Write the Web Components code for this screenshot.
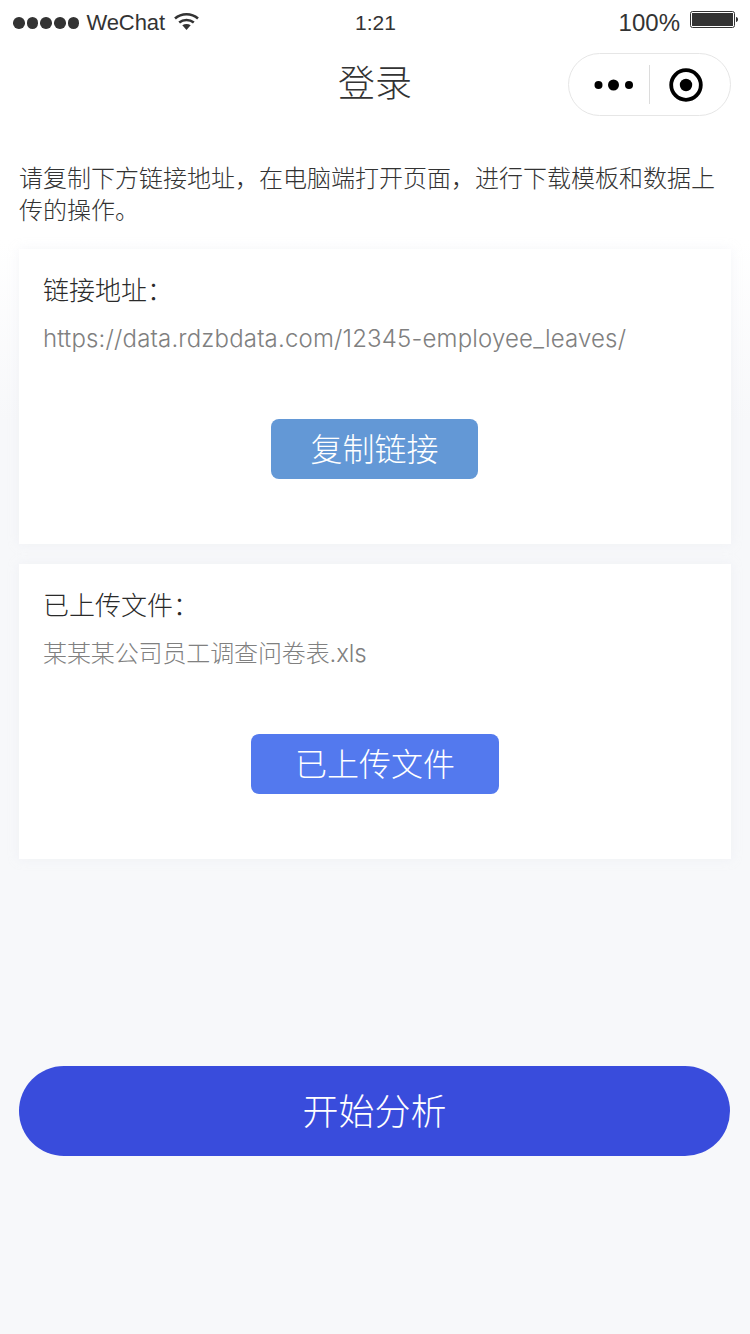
<!DOCTYPE html>
<html lang="zh">
<head>
<meta charset="utf-8">
<title>登录</title>
<style>
  html, body { margin: 0; padding: 0; }
  body {
    width: 750px;
    height: 1334px;
    overflow: hidden;
    background: linear-gradient(#fff 0, #fff 240px, #f7f8fa 420px);
    font-family: "Liberation Sans", "Noto Sans CJK SC", sans-serif;
  }
</style>
</head>
<body>
<login-page></login-page>

<script>
const CJK = '"Noto Sans CJK SC", sans-serif'

class StatusBar extends HTMLElement {
  constructor () {
    super()
    this.attachShadow({ mode: 'open' }).innerHTML = /*html*/`
    <style>
      :host {
        display: grid;
        grid-template-columns: 1fr auto 1fr;
        align-items: center;
        height: 40px;
        padding: 6px 12px 0 13px;
        box-sizing: border-box;
        font: 24px "Liberation Sans", sans-serif;
        color: #333;
      }
      .left, .right { display: flex; align-items: center; }
      .right { justify-content: flex-end; }
      .dots { display: flex; gap: 2px; margin-right: 7px; }
      .dots i { width: 11.700px; height: 11.700px; border-radius: 50%; background: #333; }
      .name { font-size: 22px; letter-spacing: -.1px; }
      .wifi { margin-left: 9px; margin-top: -5px; }
      .time { font-size: 21px; }
      .pct { margin-right: 10px; }
      .battery { margin-top: -6px; }
    </style>
    <div class="left">
      <span class="dots"><i></i><i></i><i></i><i></i><i></i></span>
      <span class="name">WeChat</span>
      <svg class="wifi" width="25" height="18" viewBox="0 0 25 18">
        <path d="M1 6.500C7.500.8 17.500.8 24 6.500" fill="none" stroke="#333" stroke-width="2.600"/>
        <path d="M5.200 10.500c4.200-3.400 10.400-3.400 14.600 0" fill="none" stroke="#333" stroke-width="2.600"/>
        <path d="M8.300 13.300c2.500-1.600 5.900-1.600 8.400 0L12.500 18z" fill="#333"/>
      </svg>
    </div>
    <div class="time">1:21</div>
    <div class="right">
      <span class="pct">100%</span>
      <svg class="battery" width="48" height="20" viewBox="0 0 48 20">
        <rect x="0.500" y="1.500" width="44" height="16" rx="2" fill="#fff" stroke="#333"/>
        <rect x="2" y="3" width="41" height="13" fill="#333"/>
        <path d="M46 7c1.300.3 2 1.200 2 2.500s-.7 2.200-2 2.500z" fill="#333"/>
      </svg>
    </div>
    `
  }
}

class NavBar extends HTMLElement {
  constructor () {
    super()
    this.attachShadow({ mode: 'open' }).innerHTML = /*html*/`
    <style>
      :host {
        display: flex;
        align-items: center;
        justify-content: center;
        position: relative;
        height: 88px;
      }
      .title {
        font: 300 37px ${CJK};
        color: #333;
        padding-bottom: 6px;
      }
      .capsule {
        position: absolute;
        right: 19px;
        top: 13px;
        width: 163px;
        height: 63px;
        box-sizing: border-box;
        border: 1px solid #e6e6e6;
        border-radius: 32px;
        background: #fff;
        display: flex;
        align-items: center;
      }
      .half { display: flex; align-items: center; justify-content: center; box-sizing: border-box; width: 80px; }
      .half.more { padding-left: 9px; }
      .half.home { padding-right: 8px; }
      .line { width: 1px; height: 39px; background: #dcdcdc; }
    </style>
    <div class="title"><slot></slot></div>
    <div class="capsule">
      <div class="half more">
        <svg width="40" height="14" viewBox="0 0 40 14">
          <circle cx="4.500" cy="7" r="4"/><circle cx="19.500" cy="7" r="5.500"/><circle cx="35" cy="7" r="4"/>
        </svg>
      </div>
      <div class="line"></div>
      <div class="half home">
        <svg width="36" height="36" viewBox="0 0 36 36">
          <circle cx="18" cy="18" r="14.800" fill="none" stroke="#000" stroke-width="3.800"/>
          <circle cx="18" cy="18" r="6.200"/>
        </svg>
      </div>
    </div>
    `
  }
}

class InfoCard extends HTMLElement {
  constructor () {
    super()
    this.attachShadow({ mode: 'open' }).innerHTML = /*html*/`
    <style>
      :host {
        display: block;
        height: 295px;
        box-sizing: border-box;
        padding: 23px 24px 0;
        background: #fff;
        box-shadow: 0 0 10px rgba(225, 228, 238, .35);
      }
      .label {
        font: 300 26px/34px ${CJK};
        color: #2a2a2a;
      }
      .value {
        margin-top: 16px;
        font: 300 24px/34px Inter, ${CJK};
        color: #808080;
        white-space: nowrap;
      }
      .action { display: flex; justify-content: center; margin-top: 63px; }
    </style>
    <div class="label"><slot name="label"></slot></div>
    <div class="value"><slot name="value"></slot></div>
    <div class="action"><slot name="action"></slot></div>
    `
  }
}

class SmallButton extends HTMLElement {
  constructor () {
    super()
    this.attachShadow({ mode: 'open' }).innerHTML = /*html*/`
    <style>
      :host {
        display: flex;
        align-items: center;
        justify-content: center;
        width: var(--w, 207px);
        height: 60px;
        box-sizing: border-box;
        padding-bottom: 4px;
        border-radius: 8px;
        background: var(--bg, #6398d6);
        color: #fff;
        font: 300 32px ${CJK};
      }
    </style>
    <slot></slot>
    `
  }
}

class StartButton extends HTMLElement {
  constructor () {
    super()
    this.attachShadow({ mode: 'open' }).innerHTML = /*html*/`
    <style>
      :host {
        display: flex;
        align-items: center;
        justify-content: center;
        height: 90px;
        box-sizing: border-box;
        padding-bottom: 4px;
        border-radius: 45px;
        background: #394cdc;
        color: #fff;
        font: 300 36px ${CJK};
      }
    </style>
    <slot></slot>
    `
  }
}

class LoginPage extends HTMLElement {
  constructor () {
    super()
    this.attachShadow({ mode: 'open' }).innerHTML = /*html*/`
    <style>
      :host { display: block; }
      .tip {
        padding: 0 20px 0 19px;
        margin-top: 33px;
        font: 300 24px/32px ${CJK};
        color: #333;
      }
      .cards {
        display: flex;
        flex-direction: column;
        gap: 20px;
        margin: 24px 19px 0;
      }
      .start { margin: 207px 20px 0 19px; }
      .url { letter-spacing: .17px; }
      .file { letter-spacing: -.12px; }
    </style>
    <status-bar></status-bar>
    <nav-bar>登录</nav-bar>
    <div class="tip">请复制下方链接地址，在电脑端打开页面，进行下载模板和数据上传的操作。</div>
    <div class="cards">
      <info-card>
        <span slot="label">链接地址：</span>
        <span slot="value" class="url">https://data.rdzbdata.com/12345-employee_leaves/</span>
        <small-button slot="action" style="margin-left:-1px">复制链接</small-button>
      </info-card>
      <info-card>
        <span slot="label">已上传文件：</span>
        <span slot="value" class="file">某某某公司员工调查问卷表.xls</span>
        <small-button slot="action" style="--w:248px;--bg:#5379ee">已上传文件</small-button>
      </info-card>
    </div>
    <start-button class="start">开始分析</start-button>
    `
  }
}

customElements.define('status-bar', StatusBar)
customElements.define('nav-bar', NavBar)
customElements.define('info-card', InfoCard)
customElements.define('small-button', SmallButton)
customElements.define('start-button', StartButton)
customElements.define('login-page', LoginPage)
</script>
</body>
</html>
